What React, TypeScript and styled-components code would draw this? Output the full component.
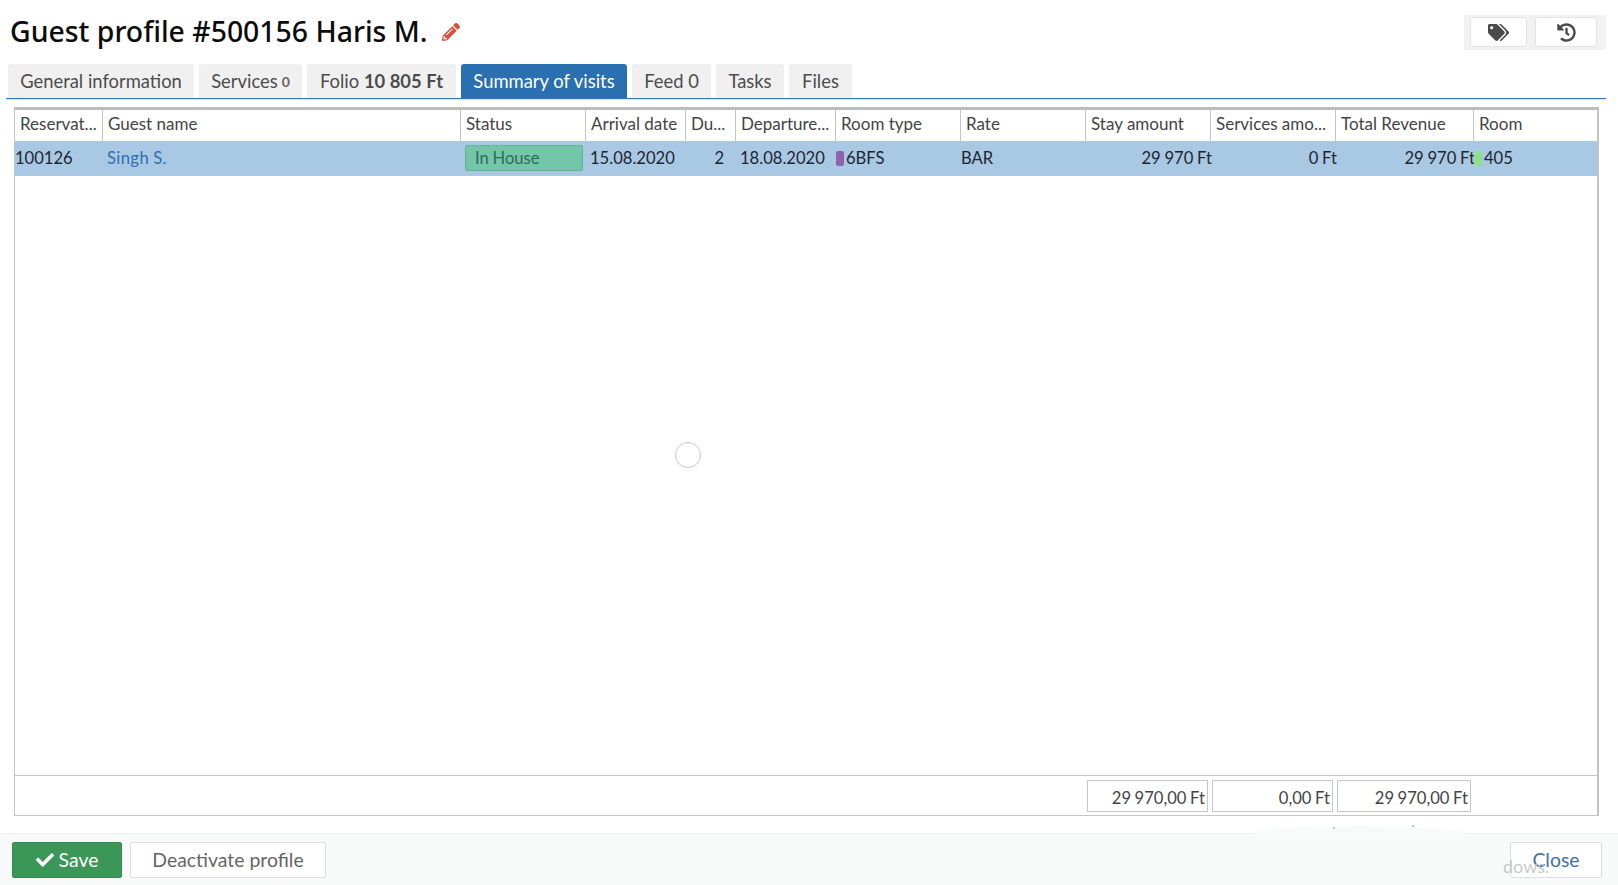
import React from 'react';
import styled, { createGlobalStyle } from 'styled-components';
import { FaCheck, FaHistory, FaPencilAlt, FaTags } from 'react-icons/fa';

const FONT = '"Lato", "Noto Sans", "Liberation Sans", sans-serif';
const COLUMNS = '88px 358px 125px 100px 50px 100px 125px 125px 125px 125px 138px 1fr';

const Global = createGlobalStyle`
  html, body { margin: 0; padding: 0; background: #fff; }
  body { font-family: ${FONT}; color: #333; overflow: hidden; }
  * { box-sizing: border-box; }
`;

const Page = styled.div`
  position: relative;
  width: 1618px;
  height: 885px;
  display: flex;
  flex-direction: column;
  overflow: hidden;
`;

const Head = styled.header`
  height: 64px;
  padding: 15px 12px 0 10px;
  display: flex;
  justify-content: space-between;
  align-items: flex-start;
`;

const Title = styled.h1`
  margin: 0;
  height: 32px;
  display: flex;
  align-items: center;
  gap: 14px;
  font-family: "Noto Sans", sans-serif;
  font-size: 28.4px;
  font-weight: 500;
  color: #0c0c0c;
  svg { width: 18px; height: 18px; margin-top: 2px; color: #dc4f3c; }
`;

const ToolGroup = styled.div`
  width: 142px;
  height: 35px;
  padding: 2px 9px 0 6px;
  background: #f2f2f2;
  display: flex;
  justify-content: space-between;
  align-items: flex-start;
`;

const ToolButton = styled.button<{ $w: number }>`
  width: ${p => p.$w}px;
  height: 30px;
  padding: 0;
  background: #fff;
  border: 1px solid #e3e3e3;
  border-radius: 3px;
  display: flex;
  align-items: center;
  justify-content: center;
  color: #4a4a4a;
  svg { width: 21px; height: 19px; }
`;

const Tabs = styled.nav`
  margin: 0 12px 0 6px;
  padding-left: 2px;
  height: 35px;
  display: flex;
  gap: 5px;
  border-bottom: 1px solid #2f78ba;
  box-shadow: 0 1px 0 #d6e5f2;
`;

const Tab = styled.div<{ $w: number; $active?: boolean }>`
  width: ${p => p.$w}px;
  height: 34px;
  display: flex;
  align-items: center;
  justify-content: center;
  gap: 4px;
  border-radius: 3px 3px 0 0;
  font-size: 18.4px;
  white-space: nowrap;
  background: ${p => (p.$active ? '#2a6fb0' : '#f0f0f0')};
  color: ${p => (p.$active ? '#fff' : '#4c4c4c')};
`;

const TabText = styled.span`
  white-space: pre;
  b { font-weight: 700; }
`;

const Count = styled.small`
  font-size: 14px;
  font-weight: 700;
  color: #666;
`;

const Grid = styled.section`
  margin: 8px 19px 0 14px;
  height: 709px;
  border: 1px solid #c4c4c4;
  border-top: 3px solid #bdbdbd;
  border-right-width: 2px;
  display: flex;
  flex-direction: column;
  font-size: 17px;
`;

const HeaderRow = styled.div`
  height: 31px;
  display: grid;
  grid-template-columns: ${COLUMNS};
`;

const HeaderCell = styled.div`
  padding: 0 0 5px 5px;
  display: flex;
  align-items: center;
  border-right: 1px solid #c4c4c4;
  color: #444;
  white-space: nowrap;
  overflow: hidden;
  &:last-child { border-right: 0; }
`;

const DataRow = styled.div`
  height: 35px;
  display: grid;
  grid-template-columns: ${COLUMNS};
  background: #a9c8e4;
  color: #1d2530;
  font-size: 16.6px;
`;

const Cell = styled.div<{ $pad?: number; $right?: number }>`
  min-width: 0;
  display: flex;
  align-items: center;
  white-space: nowrap;
  word-spacing: -0.5px;
  padding-bottom: 1px;
  padding-left: ${p => p.$pad ?? 0}px;
  ${p => p.$right !== undefined && `justify-content: flex-end; margin-right: ${p.$right}px;`}
`;

const GuestLink = styled.a`
  color: #2f6fb1;
  letter-spacing: 0.4px;
`;

const StatusBadge = styled.span`
  width: 118px;
  height: 26px;
  padding-left: 9px;
  display: flex;
  align-items: center;
  background: #73c6a7;
  border: 1px solid #62b596;
  border-radius: 2px;
  color: #2c6d57;
`;

const Swatch = styled.i<{ $color: string }>`
  width: 8px;
  height: 15px;
  margin-right: 2px;
  flex: none;
  border-radius: 2px;
  background: ${p => p.$color};
`;

const Body = styled.div`
  flex: 1;
`;

const Totals = styled.div`
  height: 40px;
  padding: 4px 126px 0 0;
  border-top: 1px solid #c4c4c4;
  display: flex;
  justify-content: flex-end;
  gap: 4px;
  font-size: 16.6px;
  word-spacing: -0.7px;
`;

const TotalBox = styled.div<{ $w: number }>`
  width: ${p => p.$w}px;
  height: 32px;
  padding: 3px 2px 0 0;
  display: flex;
  align-items: center;
  justify-content: flex-end;
  border: 1px solid #c8c8c8;
  color: #444;
`;

const Spinner = styled.div`
  position: absolute;
  left: 675px;
  top: 442px;
  width: 26px;
  height: 26px;
  border: 1.5px solid #c9c9c9;
  border-radius: 50%;
`;

const Footer = styled.footer`
  margin-top: 17px;
  flex: 1;
  padding: 8px 16px 0 12px;
  background: #f8f9f9;
  border-top: 1px solid #eeeeee;
  display: flex;
  align-items: flex-start;
  gap: 8px;
`;

const FooterButton = styled.button<{ $w: number; $primary?: boolean }>`
  width: ${p => p.$w}px;
  height: 36px;
  padding: 0 0 2px;
  display: flex;
  align-items: center;
  justify-content: center;
  gap: 5px;
  font-family: ${FONT};
  font-size: 19.4px;
  border-radius: 2px;
  border: 1px solid ${p => (p.$primary ? '#378f52' : '#dedede')};
  background: ${p => (p.$primary ? '#3b9757' : '#fff')};
  color: ${p => (p.$primary ? '#fff' : '#666')};
  svg { width: 18px; height: 18px; margin-top: 2px; }
`;

const CloseButton = styled(FooterButton)`
  margin-left: auto;
  color: #41729f;
  background: #fff;
`;

const GhostText = styled.span`
  position: absolute;
  left: 1503px;
  top: 855px;
  font-size: 18px;
  color: #c8c8c8;
  pointer-events: none;
`;

const FooterBulge = styled.div`
  position: absolute;
  left: 1254px;
  top: 826px;
  width: 212px;
  height: 8px;
  border-radius: 50% 50% 0 0 / 100% 100% 0 0;
  background: #f9fafa;
`;

const Speck = styled.i<{ $x: number; $y: number }>`
  position: absolute;
  left: ${p => p.$x}px;
  top: ${p => p.$y}px;
  width: 2px;
  height: 2px;
  background: #c4c4c4;
`;

const headers = ['Reservat...', 'Guest name', 'Status', 'Arrival date', 'Du...', 'Departure...', 'Room type', 'Rate', 'Stay amount', 'Services amo...', 'Total Revenue', 'Room'];

export default function App() {
  return (
    <Page>
      <Global />
      <Head>
        <Title>
          Guest profile #500156 Haris M.
          <FaPencilAlt />
        </Title>
        <ToolGroup>
          <ToolButton $w={57}><FaTags /></ToolButton>
          <ToolButton $w={62}><FaHistory /></ToolButton>
        </ToolGroup>
      </Head>
      <Tabs>
        <Tab $w={186}>General information</Tab>
        <Tab $w={103}>Services<Count>0</Count></Tab>
        <Tab $w={149}><TabText>Folio <b>10 805 Ft</b></TabText></Tab>
        <Tab $w={166} $active>Summary of visits</Tab>
        <Tab $w={79}>Feed 0</Tab>
        <Tab $w={68}>Tasks</Tab>
        <Tab $w={63}>Files</Tab>
      </Tabs>
      <Grid>
        <HeaderRow>
          {headers.map(h => <HeaderCell key={h}>{h}</HeaderCell>)}
        </HeaderRow>
        <DataRow>
          <Cell>100126</Cell>
          <Cell $pad={4}><GuestLink>Singh S.</GuestLink></Cell>
          <Cell $pad={4}><StatusBadge>In House</StatusBadge></Cell>
          <Cell $pad={4}>15.08.2020</Cell>
          <Cell $right={12}>2</Cell>
          <Cell $pad={4}>18.08.2020</Cell>
          <Cell><Swatch $color="#8e63ad" />6BFS</Cell>
          <Cell>BAR</Cell>
          <Cell $right={-1}>29 970 Ft</Cell>
          <Cell $right={-1}>0 Ft</Cell>
          <Cell $right={-1}>29 970 Ft</Cell>
          <Cell><Swatch $color="#8fe08e" />405</Cell>
        </DataRow>
        <Body />
        <Totals>
          <TotalBox $w={121}>29 970,00 Ft</TotalBox>
          <TotalBox $w={121}>0,00 Ft</TotalBox>
          <TotalBox $w={134}>29 970,00 Ft</TotalBox>
        </Totals>
      </Grid>
      <Footer>
        <FooterButton $w={110} $primary><FaCheck />Save</FooterButton>
        <FooterButton $w={196}>Deactivate profile</FooterButton>
        <CloseButton $w={92}>Close</CloseButton>
      </Footer>
      <Spinner />
      <FooterBulge />
      <Speck $x={1333} $y={827} />
      <Speck $x={1412} $y={825} />
      <GhostText>dows.</GhostText>
    </Page>
  );
}
